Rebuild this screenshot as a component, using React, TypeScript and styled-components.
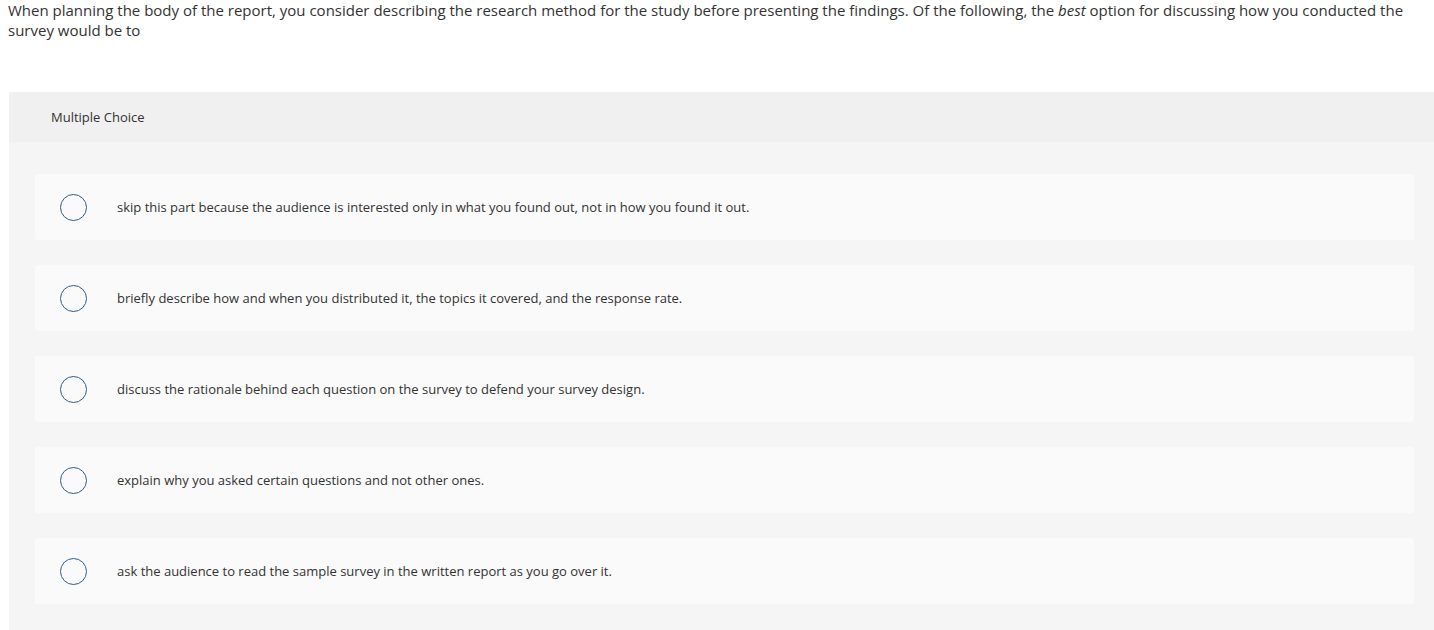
import React from "react";
import styled, { createGlobalStyle } from "styled-components";

const GlobalStyle = createGlobalStyle`
  html, body {
    margin: 0;
    padding: 0;
    background: #ffffff;
  }
  body {
    font-family: "Open Sans", Lato, "Liberation Sans", sans-serif;
    color: #333333;
  }
`;

const options = [
  "skip this part because the audience is interested only in what you found out, not in how you found it out.",
  "briefly describe how and when you distributed it, the topics it covered, and the response rate.",
  "discuss the rationale behind each question on the survey to defend your survey design.",
  "explain why you asked certain questions and not other ones.",
  "ask the audience to read the sample survey in the written report as you go over it.",
];

function App() {
  return (
    <Page>
      <GlobalStyle />
      <Prompt>
        When planning the body of the report, you consider describing the
        research method for the study before presenting the findings. Of the
        following, the <em>best</em> option for discussing how you conducted
        the survey would be to
      </Prompt>
      <Panel>
        <PanelHeader>Multiple Choice</PanelHeader>
        <OptionList>
          {options.map((text, idx) => (
            <OptionCard key={idx}>
              <Radio />
              <OptionText>{text}</OptionText>
            </OptionCard>
          ))}
        </OptionList>
      </Panel>
    </Page>
  );
}

export default App;

const Page = styled.div`
  padding: 0 0 0 8px;
`;

const Prompt = styled.p`
  margin: 0;
  padding: 0 6px 0 0;
  font-size: 15px;
  line-height: 20px;
  color: #333333;

  em {
    font-style: italic;
  }
`;

const Panel = styled.div`
  margin: 52px 0 0 1px;
  background: #f5f5f5;
  padding-bottom: 26px;
`;

const PanelHeader = styled.div`
  height: 50px;
  display: flex;
  align-items: center;
  padding-left: 42px;
  background: #f0f0f0;
  font-size: 13px;
  color: #333333;
`;

const OptionList = styled.div`
  display: flex;
  flex-direction: column;
  gap: 25px;
  padding: 32px 20px 0 26px;
`;

const OptionCard = styled.div`
  height: 66px;
  display: flex;
  align-items: center;
  background: #fafafa;
  border-radius: 3px;
  padding-left: 25px;
`;

const Radio = styled.span`
  width: 25px;
  height: 25px;
  border: 1.5px solid #2d5e8e;
  border-radius: 50%;
  flex-shrink: 0;
`;

const OptionText = styled.span`
  margin-left: 30px;
  font-size: 13px;
  color: #333333;
`;
